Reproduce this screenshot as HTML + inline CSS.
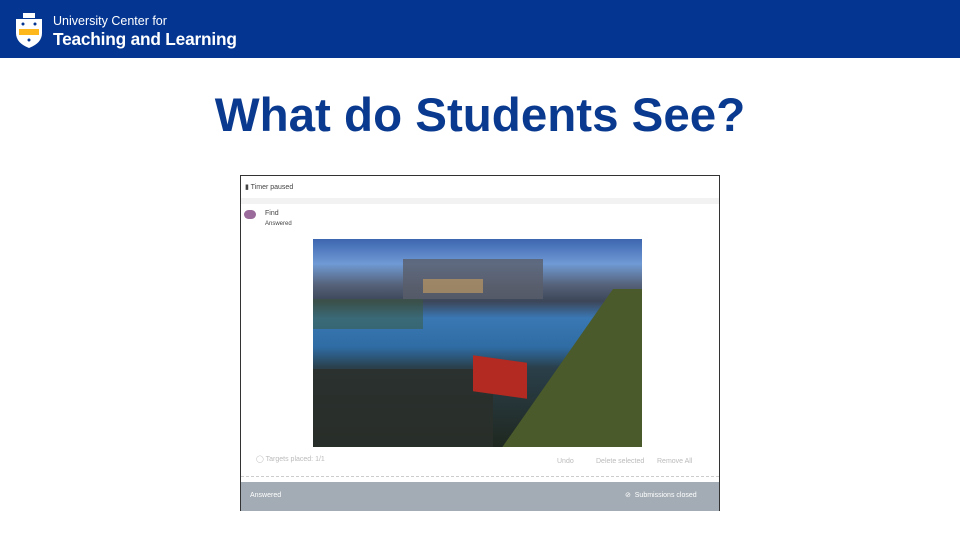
<!DOCTYPE html>
<html><head><style>
*{margin:0;padding:0;box-sizing:border-box}
body{width:960px;height:540px;background:#fff;position:relative;overflow:hidden;font-family:"Liberation Sans",sans-serif}
.hdr{position:absolute;left:0;top:0;width:960px;height:58px;background:#033591}
.t1{position:absolute;left:53px;top:14px;color:#fff;font-size:12.5px}
.t2{position:absolute;left:53px;top:29px;color:#fff;font-size:17.3px;font-weight:bold;letter-spacing:-0.2px}
h1{position:absolute;left:0;width:960px;top:88px;text-align:center;color:#0a3a8f;font-size:47.5px;font-weight:bold}
.fr{position:absolute;left:240px;top:175px;width:480px;height:336px;border:1px solid #333;background:#fff}
.s{position:absolute;font-size:7px;color:#444}
.g{color:#bbb}
</style></head><body>
<div class="hdr">
<svg style="position:absolute;left:14px;top:11px" width="30" height="38" viewBox="0 0 30 38">
<rect x="9" y="2" width="12" height="5" fill="#fff"/>
<path d="M2 8H28V22Q28 32 15 37Q2 32 2 22Z" fill="#fff"/>
<path d="M5 18H25V24H5Z" fill="#ffb81c"/>
<circle cx="9" cy="13" r="1.5" fill="#033591"/><circle cx="21" cy="13" r="1.5" fill="#033591"/><circle cx="15" cy="29" r="1.5" fill="#033591"/>
</svg>
<div class="t1">University Center for</div>
<div class="t2">Teaching and Learning</div>
</div>
<h1>What do Students See?</h1>
<div class="fr">
<div class="s" style="left:4px;top:7px">▮ Timer paused</div>
<div style="position:absolute;left:0;top:22px;width:478px;height:6px;background:#f2f2f2"></div>
<div style="position:absolute;left:3px;top:34px;width:12px;height:9px;border-radius:5px;background:#9b6b9b"></div>
<div class="s" style="left:24px;top:34px">Find</div>
<div class="s" style="left:24px;top:45px;font-size:6px">Answered</div>
<div style="position:absolute;left:72px;top:63px;width:329px;height:208px;overflow:hidden;background:linear-gradient(180deg,#3d66b0 0%,#6f9ad4 12%,#56627a 22%,#3c4658 30%,#3a78b4 38%,#2f6ca4 52%,#2a3f4a 62%,#1f2820 100%)">
<div style="position:absolute;left:90px;top:20px;width:140px;height:40px;background:#5a5e6a;opacity:.8"></div>
<div style="position:absolute;left:110px;top:40px;width:60px;height:14px;background:#c9a060;opacity:.6"></div>
<div style="position:absolute;left:0;top:60px;width:110px;height:30px;background:#3a5a3a;opacity:.5"></div>
<div style="position:absolute;left:230px;top:50px;width:140px;height:200px;background:#4a5a2a;transform:skewX(-35deg)"></div>
<div style="position:absolute;left:0;top:130px;width:180px;height:80px;background:#2a2f2a;opacity:.85"></div>
<div style="position:absolute;left:160px;top:120px;width:54px;height:36px;background:#b22a22;transform:skewY(8deg)"></div>
</div>
<div class="s g" style="left:15px;top:279px">◯ Targets placed: 1/1</div>
<div class="s g" style="left:316px;top:282px">Undo</div>
<div class="s g" style="left:355px;top:282px">Delete selected</div>
<div class="s g" style="left:416px;top:282px">Remove All</div>
<div style="position:absolute;left:0;top:300px;width:478px;border-top:1px dashed #ccc"></div>
<div style="position:absolute;left:0;top:306px;width:478px;height:29px;background:#a3acb4"></div>
<div class="s" style="left:9px;top:316px;color:#fff">Answered</div>
<div class="s" style="left:384px;top:315px;color:#fff">⊘ &nbsp;Submissions closed</div>
</div>
</body></html>
